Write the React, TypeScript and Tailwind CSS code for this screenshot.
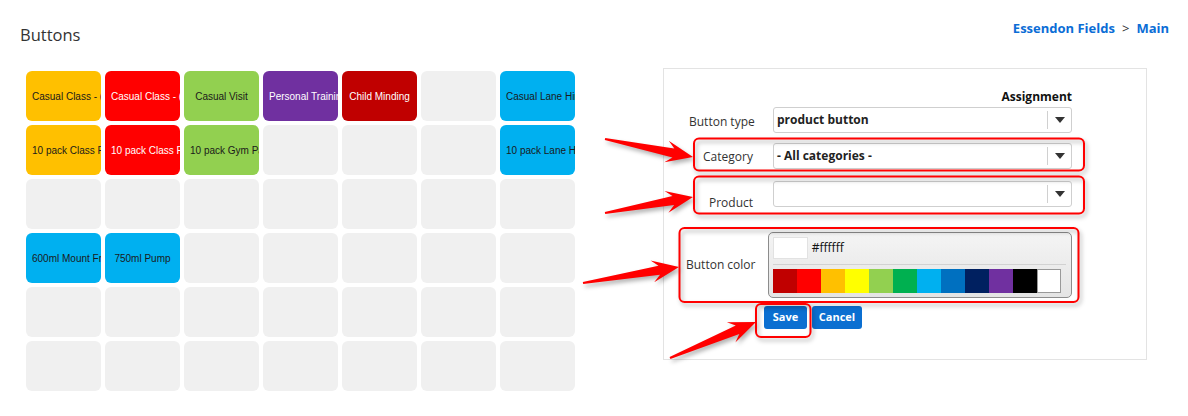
import React from "react";

type Cell = { label: string; bg: string; fg: string } | null;

const Y = "bg-[#ffc000]";
const R = "bg-[#ff0000]";
const G = "bg-[#92d050]";
const P = "bg-[#7030a0]";
const DR = "bg-[#c00000]";
const B = "bg-[#00b0f0]";

const DARK = "text-[#1a1a1a]";
const LIGHT = "text-white";

const GRID: Cell[][] = [
  [
    { label: "Casual Class - (Member)", bg: Y, fg: DARK },
    { label: "Casual Class - (Non Member)", bg: R, fg: LIGHT },
    { label: "Casual Visit", bg: G, fg: DARK },
    { label: "Personal Training", bg: P, fg: LIGHT },
    { label: "Child Minding", bg: DR, fg: LIGHT },
    null,
    { label: "Casual Lane Hire", bg: B, fg: DARK },
  ],
  [
    { label: "10 pack Class Pass", bg: Y, fg: DARK },
    { label: "10 pack Class Pass", bg: R, fg: LIGHT },
    { label: "10 pack Gym Pass", bg: G, fg: DARK },
    null,
    null,
    null,
    { label: "10 pack Lane Hire", bg: B, fg: DARK },
  ],
  [null, null, null, null, null, null, null],
  [
    { label: "600ml Mount Franklin", bg: B, fg: DARK },
    { label: "750ml Pump", bg: B, fg: DARK },
    null,
    null,
    null,
    null,
    null,
  ],
  [null, null, null, null, null, null, null],
  [null, null, null, null, null, null, null],
];

const PALETTE = [
  "bg-[#c00000]",
  "bg-[#ff0000]",
  "bg-[#ffc000]",
  "bg-[#ffff00]",
  "bg-[#92d050]",
  "bg-[#00b050]",
  "bg-[#00b0f0]",
  "bg-[#0070c0]",
  "bg-[#002060]",
  "bg-[#7030a0]",
  "bg-[#000000]",
];

function GridButton({ cell }: { cell: Cell }) {
  if (!cell) return <div className="h-[50px] rounded-[6px] bg-[#f0f0f0]" />;
  return (
    <div
      className={`flex h-[50px] items-center overflow-hidden rounded-[6px] pt-[2px] text-[10px] ${cell.bg} ${cell.fg}`}
    >
      <span className="block w-full overflow-hidden whitespace-nowrap px-[6px] text-center leading-[14px]">
        {cell.label}
      </span>
    </div>
  );
}

function Select({ value }: { value?: string }) {
  return (
    <div className="flex h-[26px] flex-1 items-center rounded-[3px] border border-[#cfcfcf] bg-white">
      <span className="flex-1 pl-[3px] text-[12px] font-bold text-[#222]">{value}</span>
      <span className="h-[18px] w-px bg-[#d0d0d0]" />
      <span className="flex w-[23px] justify-center">
        <svg width="10" height="6" viewBox="0 0 10 6">
          <path d="M0 0h10L5 6z" fill="#333" />
        </svg>
      </span>
    </div>
  );
}

// tapered callout arrow from (x1,y1) to the tip at (x2,y2)
function Arrow({ x1, y1, x2, y2 }: { x1: number; y1: number; x2: number; y2: number }) {
  const L = Math.hypot(x2 - x1, y2 - y1);
  const deg = (Math.atan2(y2 - y1, x2 - x1) * 180) / Math.PI;
  const pts = [
    [0, -1.1],
    [L - 20, -4.6],
    [L - 27, -11],
    [L, 0],
    [L - 27, 11],
    [L - 20, 4.6],
    [0, 1.1],
  ]
    .map((p) => p.join(","))
    .join(" ");
  return <polygon points={pts} fill="#ff0000" transform={`translate(${x1} ${y1}) rotate(${deg})`} />;
}

function Callouts() {
  return (
    <svg
      className="pointer-events-none absolute inset-0"
      width="1188"
      height="416"
      viewBox="0 0 1188 416"
      style={{ filter: "drop-shadow(2px 3px 2px rgba(0,0,0,0.3))" }}
    >
      <g fill="none" stroke="#ff0000" strokeWidth="2">
        <rect x="694" y="138.5" width="390" height="32" rx="5" />
        <rect x="694" y="176.5" width="390" height="37" rx="5" />
        <rect x="679.5" y="228" width="399" height="74" rx="5" />
        <rect x="756" y="304" width="54.5" height="33" rx="5" />
      </g>
      <Arrow x1={605} y1={139} x2={693} y2={157} />
      <Arrow x1={605} y1={213} x2={693} y2={197} />
      <Arrow x1={583} y1={283} x2={679} y2={267} />
      <Arrow x1={670} y1={358} x2={756} y2={322} />
    </svg>
  );
}

export default function App() {
  return (
    <div className="relative h-[416px] w-[1188px] overflow-hidden bg-white font-['Open_Sans',sans-serif] text-[#333]">
      <div className="flex">
        <div className="pl-[20px] pt-[24px]">
          <h1 className="text-[16.5px] leading-[22px] text-[#333]">Buttons</h1>
          <div className="ml-[6px] mt-[25px] grid grid-cols-[repeat(7,75px)] gap-[4px] font-['Liberation_Sans',Arial,sans-serif]">
            {GRID.flat().map((cell, i) => (
              <GridButton key={i} cell={cell} />
            ))}
          </div>
        </div>

        <div className="ml-auto flex flex-col items-end pr-[19px] pt-[19px]">
          <nav className="flex items-center gap-[7px] text-[13px] font-bold leading-[18px] text-[#0b6dd6]">
            <span>Essendon Fields</span>
            <span className="font-normal text-[#333]">&gt;</span>
            <span>Main</span>
          </nav>

          <section className="mr-[22px] mt-[31px] h-[292px] w-[484px] border border-[#e3e3e3] pl-[25px] pr-[74px] pt-[20px] text-[12px]">
            <div className="text-right font-bold leading-[16px] text-[#111]">Assignment</div>

            <div className="mt-[2px] flex items-center">
              <span className="w-[84px] pt-[4px]">Button type</span>
              <Select value="product button" />
            </div>

            <div className="mt-[10px] flex items-center">
              <span className="w-[84px] pl-[14px] pt-[2px]">Category</span>
              <Select value="- All categories -" />
            </div>

            <div className="mt-[12px] flex items-start">
              <span className="w-[84px] pl-[20px] pt-[14px] leading-[16px]">Product</span>
              <Select />
            </div>

            <div className="-ml-[3px] mt-[21px] flex items-center">
              <span className="w-[82px]">Button color</span>
              <div className="w-[305px] rounded-[5px] border border-[#8c8c8c] bg-gradient-to-b from-[#f4f4f4] to-[#e4e4e4] p-[4px]">
                <div className="flex h-[22px] items-center">
                  <span className="h-[22px] w-[35px] border border-[#e2e2e2] bg-white" />
                  <span className="ml-[4px] text-[12px] text-[#111]">#ffffff</span>
                </div>
                <div className="mr-[1px] mt-[5px] border-t border-[#d2d2d2]" />
                <div className="mt-[4px] flex">
                  {PALETTE.map((c) => (
                    <span key={c} className={`h-[24px] w-[24px] ${c}`} />
                  ))}
                  <span className="h-[24px] w-[24px] border border-[#999] bg-white" />
                </div>
              </div>
            </div>

            <div className="ml-[75px] mt-[8px] flex gap-[5px] text-[11px] font-bold text-white">
              <button className="h-[23px] w-[43px] rounded-[3px] bg-[#0b6fd1]">Save</button>
              <button className="h-[23px] w-[50px] rounded-[3px] bg-[#0b6fd1]">Cancel</button>
            </div>
          </section>
        </div>
      </div>

      <Callouts />
    </div>
  );
}
